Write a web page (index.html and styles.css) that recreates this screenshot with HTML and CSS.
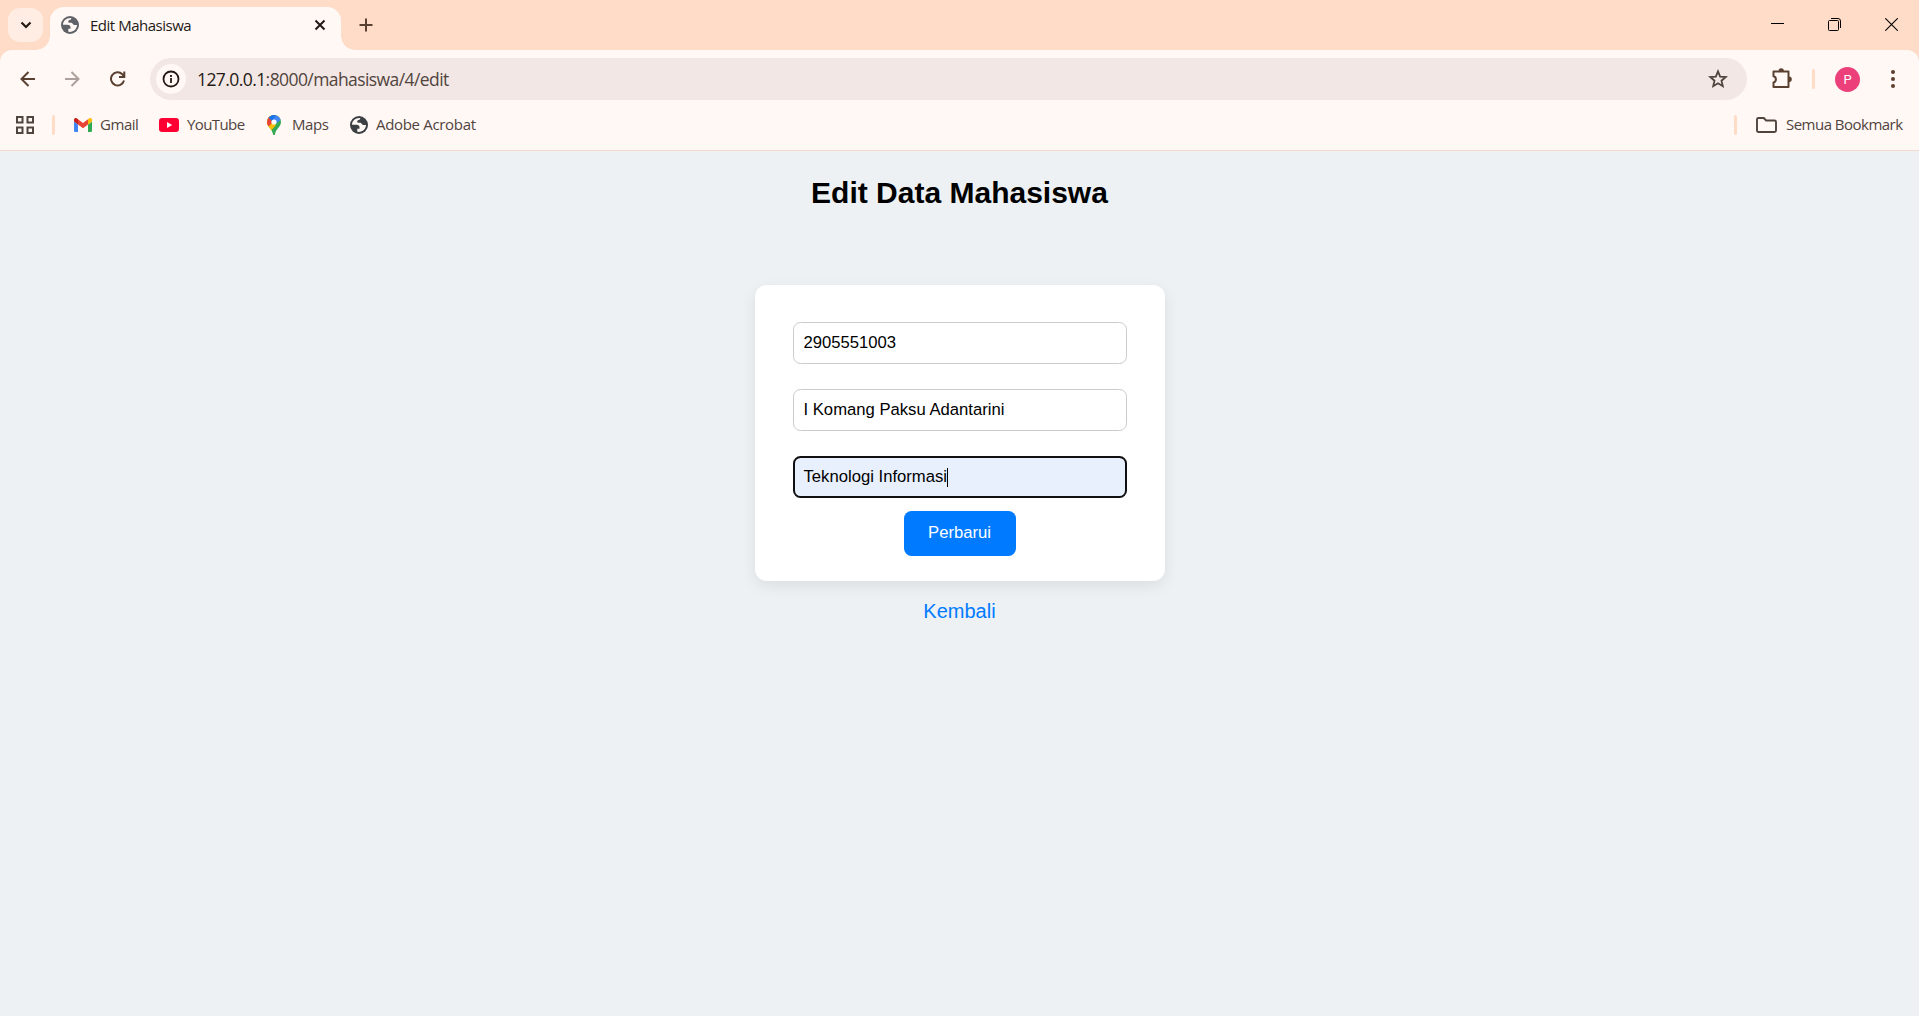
FILE: index.html
```html
<!DOCTYPE html>
<html lang="id">
<head>
<meta charset="utf-8">
<title>Edit Mahasiswa</title>
<link rel="stylesheet" href="styles.css">
</head>
<body>
<svg width="0" height="0" class="defs">
  <symbol id="globe" viewBox="0 0 18 18">
    <circle cx="9" cy="9" r="9" fill="currentColor"/>
    <path d="M10.500 2C5.500 1.500 2 5 2 8.800h4.500c2 0 3 1 3 2.400v1.600H7.300v3C12.500 16.500 16 13 16 9h-2.500c-1.500 0-1.800-2-3-2.200H8.700c-1 0-1.500-.6-1.500-1.400S8 4 9.300 4z" fill="#fff8f5"/>
  </symbol>
</svg>
<div class="browser">
  <header class="tabstrip">
    <button class="tab-search" aria-label="Cari tab"><svg width="12" height="8" viewBox="0 0 12 8"><path d="M1.500 1.500L6 6l4.500-4.500" fill="none" stroke="#241a15" stroke-width="2.200"/></svg></button>
    <div class="tab">
      <svg class="favicon" width="18" height="18"><use href="#globe"/></svg>
      <span class="tab-title">Edit Mahasiswa</span>
      <svg class="tab-close" width="12" height="12" viewBox="0 0 12 12"><path d="M1.500 1.500l9 9m0-9l-9 9" stroke="#241a15" stroke-width="2"/></svg>
    </div>
    <svg class="new-tab" width="14" height="14" viewBox="0 0 14 14"><path d="M7 .5v13M.5 7h13" stroke="#5a4030" stroke-width="2"/></svg>
    <div class="window-controls">
      <svg width="13" height="13" viewBox="0 0 13 13"><path d="M0 5.500h13" stroke="#000"/></svg>
      <svg width="13" height="13" viewBox="0 0 13 13" fill="none" stroke="#000"><rect x=".5" y="2.500" width="10" height="10" rx="1"/><path d="M3 .5h7a2.500 2.500 0 0 1 2.500 2.500v7"/></svg>
      <svg width="13" height="13" viewBox="0 0 13 13"><path d="M.3.300l12.400 12.400m0-12.400L.3 12.700" stroke="#000" stroke-width="1.100"/></svg>
    </div>
  </header>
  <div class="toolbar">
    <nav class="nav-icons">
      <svg width="16" height="16" viewBox="0 0 16 16" fill="none" stroke="#5a4030" stroke-width="2"><path d="M15 8H2M8.500 1L1.500 8l7 7"/></svg>
      <svg width="16" height="16" viewBox="0 0 16 16" fill="none" stroke="#aca09c" stroke-width="2"><path d="M0 8h13M6.500 1l7 7-7 7"/></svg>
      <svg width="16" height="16" viewBox="0 0 16 16" fill="none" stroke="#5a4030" stroke-width="2"><path d="M14 9.500A6.600 6.600 0 1 1 12.300 3.200L14 5.500M14.300.5V6H9"/></svg>
    </nav>
    <div class="address">
      <span class="info"><svg width="18" height="18" viewBox="0 0 18 18"><circle cx="9" cy="9" r="7.500" fill="none" stroke="#241a15" stroke-width="1.800"/><path d="M9 8v5M9 5v2" stroke="#241a15" stroke-width="1.800"/></svg></span>
      <span class="url"><span class="host">127.0.0.1</span>:8000/mahasiswa/4/edit</span>
      <svg class="star" width="20" height="20" viewBox="0 0 20 20"><path d="M10 2.400l2.150 5.200 5.600.45-4.250 3.650 1.300 5.500L10 14.300l-4.800 2.900 1.300-5.500L2.250 8.050l5.600-.45z" fill="none" stroke="#50443e" stroke-width="1.800"/></svg>
    </div>
    <svg class="puzzle" width="22" height="22" viewBox="0 0 22 22"><path d="M2.500 3.500h15v15.500h-15v-4.600c3.200-.5 3.200-5.700 0-6.200z" fill="none" stroke="#5a4030" stroke-width="2" stroke-linejoin="round"/><path d="M7.500 3a2.700 2.700 0 0 1 5.400 0zM18 8.500a2.800 2.800 0 0 1 0 5.600z" fill="#5a4030"/></svg>
    <i class="divider"></i>
    <span class="avatar">P</span>
    <svg class="more" width="4" height="18" viewBox="0 0 4 18" fill="#5a4030"><circle cx="2" cy="2" r="2"/><circle cx="2" cy="9" r="2"/><circle cx="2" cy="16" r="2"/></svg>
  </div>
  <nav class="bookmarks">
    <svg class="apps" width="18" height="18" viewBox="0 0 18 18" fill="none" stroke="#50443e" stroke-width="2"><path d="M1 1h5.500v5.500H1zM11.500 1H17v5.500h-5.500zM1 11.500h5.500V17H1zM11.500 11.500H17V17h-5.500z"/></svg>
    <i class="divider"></i>
    <a class="bookmark gmail"><svg width="18" height="14" viewBox="0 0 18 14"><path d="M0 3.500l4 3V14H1.200A1.200 1.200 0 0 1 0 12.800z" fill="#4285f4"/><path d="M18 3.500l-4 3V14h2.800a1.200 1.200 0 0 0 1.200-1.200z" fill="#34a853"/><path d="M4 1.300l5 3.800 5-3.800v5.200l-5 3.800-5-3.800z" fill="#ea4335"/><path d="M0 3.500V1.800C0 .2 1.800-.5 3 .5l1 .8v5.200z" fill="#c5221f"/><path d="M18 3.500V1.800c0-1.600-1.800-2.300-3-1.300l-1 .8v5.200z" fill="#fbbc04"/></svg><span>Gmail</span></a>
    <a class="bookmark youtube"><svg width="20" height="14" viewBox="0 0 20 14"><rect width="20" height="14" rx="3.200" fill="#f03"/><path d="M8 4l5.200 3L8 10z" fill="#fff"/></svg><span>YouTube</span></a>
    <a class="bookmark maps"><svg width="14" height="20" viewBox="0 0 14 20"><defs><clipPath id="pin"><path d="M7 0a7 7 0 0 1 7 7c0 4.500-4.400 6-5.800 11.500C8 19.500 7.600 20 7 20s-1-.5-1.200-1.500C4.400 13 0 11.500 0 7a7 7 0 0 1 7-7z"/></clipPath></defs><g clip-path="url(#pin)"><path d="M0 0h14v20H0z" fill="#34a853"/><path d="M0 0h14v4L7 7 0 14z" fill="#fbbc04"/><path d="M0 8l5-1 4 3-6 7-3-3z" fill="#fbbc04"/><path d="M0 0h3l4 6-5 5H0z" fill="#ea4335"/><path d="M2 2l3-2h9v5L8 9z" fill="#4285f4"/><path d="M1.500 2.500L5 0h4L5 6z" fill="#1a73e8"/></g><circle cx="7" cy="7" r="2.600" fill="#fff"/></svg><span>Maps</span></a>
    <a class="bookmark acrobat"><svg width="18" height="18"><use href="#globe"/></svg><span>Adobe Acrobat</span></a>
    <i class="divider end"></i>
    <a class="bookmark all"><svg width="21" height="16" viewBox="0 0 21 16"><path d="M2.500 1h5.300l2.300 2.500h8.400A1.500 1.500 0 0 1 20 5v8.500a1.500 1.500 0 0 1-1.500 1.500h-16A1.500 1.500 0 0 1 1 13.500v-11A1.500 1.500 0 0 1 2.500 1z" fill="none" stroke="#50443e" stroke-width="1.900"/></svg><span>Semua Bookmark</span></a>
  </nav>
</div>
<main class="page">
  <h1>Edit Data Mahasiswa</h1>
  <form class="card">
    <div class="field">2905551003</div>
    <div class="field">I Komang Paksu Adantarini</div>
    <div class="field focused">Teknologi Informasi<i class="caret"></i></div>
    <button type="button" class="submit">Perbarui</button>
  </form>
  <a class="back">Kembali</a>
</main>
</body>
</html>
```
FILE: styles.css
```css
* { box-sizing: border-box; }
body { margin: 0; height: 1016px; overflow: hidden; display: flex; flex-direction: column; background: #edf1f4; font-family: "Liberation Sans", Arial, sans-serif; }
svg { display: block; flex: none; }
.defs { position: absolute; }
.browser { height: 151px; flex: none; background: #ffdcc8; border-bottom: 1px solid #f7dace; font-family: "Open Sans", "Noto Sans", sans-serif; }

.tabstrip { height: 50px; display: flex; align-items: flex-start; }
.tab-search { width: 35px; height: 34px; margin: 8px 7px 0 8px; padding: 0; border: 0; border-radius: 12px; background: #ffede3; display: grid; place-items: center; }
.tab { position: relative; width: 290.500px; height: 43px; margin-top: 7px; padding: 0 14.500px 7px 11px; display: flex; align-items: center; background: #fff8f5; border-radius: 14px 14px 0 0; }
.tab::before, .tab::after { content: ""; position: absolute; bottom: 0; width: 14px; height: 14px; }
.tab::before { right: 100%; background: radial-gradient(circle at 0 0, transparent 13.500px, #fff8f5 14px); }
.tab::after { left: 100%; background: radial-gradient(circle at 100% 0, transparent 13.500px, #fff8f5 14px); }
.favicon { color: #5f6368; }
.tab-title { margin-left: 11px; font-size: 15px; letter-spacing: -0.480px; color: #241a15; white-space: nowrap; }
.tab-close { margin-left: auto; }
.new-tab { margin: 18px 0 0 18px; }
.window-controls { margin: 18px 21px 0 auto; display: flex; gap: 44px; }

.toolbar { height: 58px; display: flex; align-items: center; background: #fff8f5; border-radius: 12px 12px 0 0; }
.nav-icons { display: flex; gap: 29px; padding-left: 20px; width: 150px; }
.address { width: 1597px; height: 42px; display: flex; align-items: center; border-radius: 21px; background: #f2e7e4; padding: 0 19px 0 6px; }
.info { width: 30px; height: 30px; border-radius: 50%; background: #fff8f5; display: grid; place-items: center; }
.url { margin-left: 11px; font-size: 17.500px; letter-spacing: -0.580px; color: #50443e; white-space: nowrap; }
.host { color: #241a15; }
.star { margin-left: auto; }
.puzzle { margin-left: 24px; }
.divider { width: 3px; height: 20px; border-radius: 2px; background: #ffdcc8; }
.toolbar .divider { margin-left: 19px; }
.avatar { width: 25px; height: 25px; margin-left: 20px; border-radius: 50%; background: #ec407a; color: #fff; font: 13px/25px Roboto, sans-serif; text-align: center; }
.more { margin-left: 30.500px; }

.bookmarks { height: 42px; padding: 0 17px 9px 15.500px; display: flex; align-items: center; background: #fff8f5; color: #50443e; font-size: 15px; }
.bookmarks .divider { margin-left: 18.500px; }
.bookmark { display: flex; align-items: center; white-space: nowrap; letter-spacing: -0.450px; }
.bookmark span { margin-left: 8px; padding-bottom: 1px; }
.gmail { width: 85px; margin-left: 19px; }
.youtube { width: 108px; letter-spacing: -0.600px; }
.maps { width: 83px; }
.maps span { margin-left: 11px; }
.acrobat { letter-spacing: -0.320px; }
.acrobat svg { color: #3c4043; }
.acrobat span { margin-left: 8px; }
.bookmarks .end { margin-left: auto; }
.all { width: 146px; margin-left: 19px; letter-spacing: -0.520px; }
.all span { margin-left: 9px; }

.page { flex: 1; display: flex; flex-direction: column; align-items: center; padding-top: 25px; }
h1 { margin: 0 0 75px; font-size: 30px; line-height: 34px; color: #000; }
.card { width: 410px; height: 296px; padding-top: 37px; display: flex; flex-direction: column; align-items: center; background: #fff; border-radius: 12px; box-shadow: 0 5px 15px rgba(0, 0, 0, .08); }
.field { width: 334px; height: 42px; margin-bottom: 25px; padding: 0 10px; display: flex; align-items: center; border: 1px solid #ccc; border-radius: 7.500px; background: #fff; color: #000; font-size: 16.667px; }
.focused { margin-bottom: 13px; padding: 0 9px; border: 2px solid #101010; background: #e8f0fe; }
.caret { width: 1px; height: 19px; background: #000; }
.submit { width: 112px; height: 45px; padding: 0 0 2px; border: 0; border-radius: 7.500px; background: #007bff; color: #fff; font: 16.667px "Liberation Sans", Arial, sans-serif; }
.back { margin-top: 18px; font-size: 20px; line-height: 24px; color: #007bff; }
```
